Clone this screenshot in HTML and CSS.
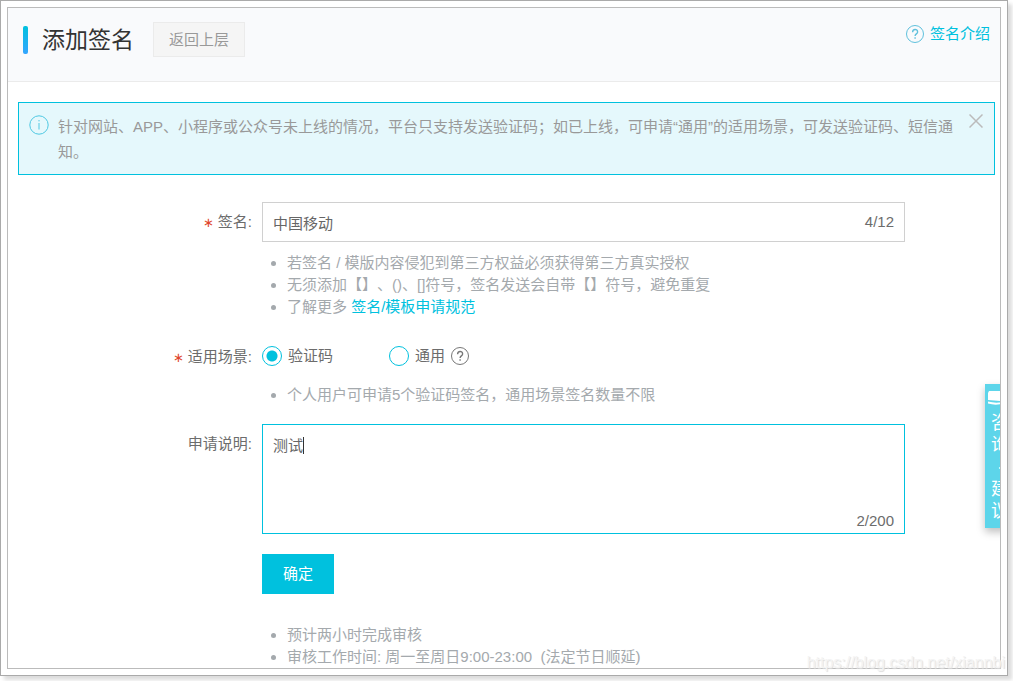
FILE: index.html
```
<!DOCTYPE html>
<html lang="zh-CN">
<head>
<meta charset="utf-8">
<meta name="viewport" content="width=device-width, initial-scale=1">
<title>添加签名</title>
<link rel="stylesheet" href="styles.css">
</head>
<body>
<div class="window">
  <main class="page">
    <header class="page-header">
      <h1 class="title">添加签名</h1>
      <button type="button" class="btn-back">返回上层</button>
      <a class="intro-link" href="#intro">
        <svg class="icon-help" viewBox="0 0 18 18" aria-hidden="true"><circle cx="9" cy="9" r="8.5"/><path class="mark" d="M6.600 7.300c0-3.700 5-3.600 5-.4 0 2-2.500 2-2.500 4.100M9.100 12.200v1.600"/></svg>
        <span>签名介绍</span>
      </a>
    </header>

    <section class="notice">
      <svg class="icon-info" viewBox="0 0 20 20" aria-hidden="true"><circle cx="10" cy="10" r="9.2"/><path d="M10 8v6.5M10 5v1.4"/></svg>
      <p class="notice-text">针对网站、APP、小程序或公众号未上线的情况，平台只支持发送验证码；如已上线，可申请“通用”的适用场景，可发送验证码、短信通知。</p>
      <button type="button" class="notice-close" aria-label="关闭">
        <svg class="icon-close" viewBox="0 0 14 14" aria-hidden="true"><path d="M.5.5l13 13M13.500.5l-13 13"/></svg>
      </button>
    </section>

    <form class="form">
      <div class="row row-sign">
        <label class="label" for="sign"><span class="required">∗</span>签名:</label>
        <div class="field">
          <div class="control">
            <input class="text-input" id="sign" type="text" value="中国移动" maxlength="12">
            <span class="counter">4/12</span>
          </div>
          <ul class="tips">
            <li>若签名 / 模版内容侵犯到第三方权益必须获得第三方真实授权</li>
            <li>无须添加【】、()、[]符号，签名发送会自带【】符号，避免重复</li>
            <li>了解更多 <a href="#rules">签名/模板申请规范</a></li>
          </ul>
        </div>
      </div>

      <div class="row row-scene">
        <span class="label label-short" id="scene-label"><span class="required">∗</span>适用场景:</span>
        <div class="field">
          <div class="choices" role="radiogroup" aria-labelledby="scene-label">
            <label class="choice"><input type="radio" name="scene" checked>验证码</label>
            <label class="choice"><input type="radio" name="scene">通用
              <svg class="icon-help icon-help-dark" viewBox="0 0 18 18" aria-hidden="true"><circle cx="9" cy="9" r="8.5"/><path class="mark" d="M6.600 7.300c0-3.700 5-3.600 5-.4 0 2-2.500 2-2.500 4.100M9.100 12.200v1.600"/></svg>
            </label>
          </div>
          <ul class="tips tips-scene">
            <li>个人用户可申请5个验证码签名，通用场景签名数量不限</li>
          </ul>
        </div>
      </div>

      <div class="row">
        <label class="label" for="remark">申请说明:</label>
        <div class="field">
          <div class="control">
            <textarea class="text-area" id="remark" maxlength="200">测试</textarea>
            <span class="caret"></span>
            <span class="counter counter-area">2/200</span>
          </div>
          <button type="button" class="btn-submit">确定</button>
          <ul class="tips tips-final">
            <li>预计两小时完成审核</li>
            <li>审核工作时间: 周一至周日9:00-23:00&nbsp; (法定节日顺延)</li>
          </ul>
        </div>
      </div>
    </form>

    <aside class="feedback">
      <svg class="icon-chat" viewBox="0 0 24 14" aria-hidden="true"><path d="M1 0h22v9q-5.500 2.500-11 1Q6 9.500 0 9V2z"/><path d="M0 10.500q6 1.500 11 1t13-1.500v3H13Q7 14.500 0 12.500z"/></svg>
      <span class="feedback-text">咨询·建议</span>
    </aside>
  </main>
  <span class="watermark">https://blog.csdn.net/xiannbi</span>
</div>
</body>
</html>
```
FILE: styles.css
```
* {
  box-sizing: border-box;
}

body {
  margin: 0;
  padding: 0 5px 5px 0;
  min-height: 100vh;
  display: flex;
  background: #fff;
  color: #6c6c6c;
  font: 15px/22px "Liberation Sans", "Noto Sans CJK SC", sans-serif;
  text-spacing-trim: space-all;
}

h1,
p,
ul {
  margin: 0;
}

button,
input,
textarea {
  font: inherit;
}

a {
  color: #00c1de;
  text-decoration: none;
}

svg {
  flex: none;
  fill: none;
}

.window {
  position: relative;
  flex: 1;
  min-width: 0;
  display: flex;
  padding: 6px;
  border: 1px solid #aaa;
  background: #fff;
  box-shadow: 4px 4px 4px rgba(0, 0, 0, 0.14);
}

.page {
  position: relative;
  flex: 1;
  min-width: 0;
  overflow: hidden;
  border: 1px solid #bbb;
}

/* Header */
.page-header {
  display: flex;
  align-items: flex-start;
  padding: 14px 10px 23px 15px;
  border-bottom: 1px solid #ebebeb;
  background: #f9fafc;
}

.title {
  display: flex;
  align-items: center;
  gap: 14px;
  margin-right: 19px;
  color: #333;
  font-size: 23px;
  font-weight: 400;
  line-height: 36px;
}

.title::before {
  content: "";
  width: 5px;
  height: 28px;
  border-radius: 2px;
  background: linear-gradient(#00c1de, #35a5ff);
}

.btn-back {
  width: 92px;
  height: 35px;
  padding: 0;
  border: 1px solid #ebebeb;
  background: #f5f5f5;
  color: #999;
}

.intro-link {
  display: flex;
  align-items: center;
  gap: 6px;
  margin-left: auto;
  line-height: 24px;
}

.icon-help {
  width: 18px;
  height: 18px;
  stroke: #5fc0dc;
}

.icon-help .mark {
  stroke-width: 1.4;
}

.icon-help-dark {
  stroke: #777;
}

/* Notice */
.notice {
  display: flex;
  align-items: flex-start;
  margin: 20px 5px 0 10px;
  padding: 11px 11px 10px 10px;
  border: 1px solid #00c1de;
  background: #e5f8fc;
  color: #999;
  line-height: 25px;
}

.icon-info {
  width: 20px;
  height: 20px;
  margin-top: 1px;
  stroke: #4ec8e2;
}

.notice-text {
  flex: 1;
  margin: 0 13px 0 9px;
}

.notice-close {
  display: flex;
  padding: 0;
  border: 0;
  background: none;
}

.icon-close {
  width: 14px;
  height: 14px;
  stroke: #bbb;
  stroke-width: 1.5;
}

/* Form */
.form {
  padding: 27px 95px 0 0;
}

.row {
  display: grid;
  grid-template-columns: 244px minmax(0, 1fr);
  column-gap: 10px;
}

.row-sign {
  margin-bottom: 28px;
}

.row-scene {
  margin-bottom: 18px;
}

.label {
  line-height: 40px;
  text-align: right;
}

.label-short {
  line-height: 22px;
}

.required {
  margin-right: 4px;
  color: #e0452b;
  font-size: 13px;
}

.control {
  position: relative;
  display: flex;
}

.text-input,
.text-area {
  width: 100%;
  padding: 0 10px;
  border: 1px solid #d0d0d0;
  border-radius: 0;
  outline: 0;
  background: #fff;
  color: #666;
}

.text-input {
  height: 40px;
}

.text-area {
  height: 110px;
  padding-top: 10px;
  border-color: #00c1de;
  resize: none;
}

.counter {
  position: absolute;
  top: 9px;
  right: 11px;
}

.counter-area {
  top: auto;
  bottom: 2px;
}

.caret {
  position: absolute;
  top: 13px;
  left: 41px;
  width: 1px;
  height: 17px;
  background: #333;
}

.tips {
  margin-top: 10px;
  padding-left: 25px;
  color: #a4a9ad;
  list-style: none;
}

.tips li {
  position: relative;
}

.tips li::before {
  content: "";
  position: absolute;
  top: 9px;
  left: -16px;
  width: 5px;
  height: 5px;
  border-radius: 50%;
  background: #a4a9ad;
}

.tips-scene {
  margin-top: 18px;
}

.tips-final {
  margin-top: 30px;
}

.choices {
  display: flex;
  gap: 56px;
}

.choice {
  display: flex;
  align-items: center;
  gap: 6px;
  height: 20px;
}

.choice input {
  appearance: none;
  width: 20px;
  height: 20px;
  margin: 0;
  border: 1px solid #00c1de;
  border-radius: 50%;
  background: #fff;
}

.choice input:checked {
  background: radial-gradient(circle, #00c1de 5px, #fff 6px);
}

.btn-submit {
  display: block;
  width: 72px;
  height: 40px;
  margin-top: 20px;
  padding: 0;
  border: 0;
  background: #00c1de;
  color: #fff;
}

/* Feedback tab, partly past the right edge of the page */
.feedback {
  position: absolute;
  top: 376px;
  right: -15px;
  width: 30px;
  height: 144px;
  padding: 7px 3px;
  background: #5dd5ea;
  box-shadow: 0 4px 8px rgba(0, 0, 0, 0.25);
  color: #fff;
  font-size: 18px;
}

.icon-chat {
  display: block;
  width: 24px;
  height: 14px;
  fill: #fff;
}

.feedback-text {
  display: block;
  width: 18px;
  margin: 7px 0 0 3px;
  line-height: 22px;
  text-align: center;
  line-break: anywhere;
}

.watermark {
  position: absolute;
  right: 2px;
  bottom: 1px;
  color: #f4f4f4;
  font-size: 16px;
  text-shadow: 1px 1px 1px #ddd;
}
```
